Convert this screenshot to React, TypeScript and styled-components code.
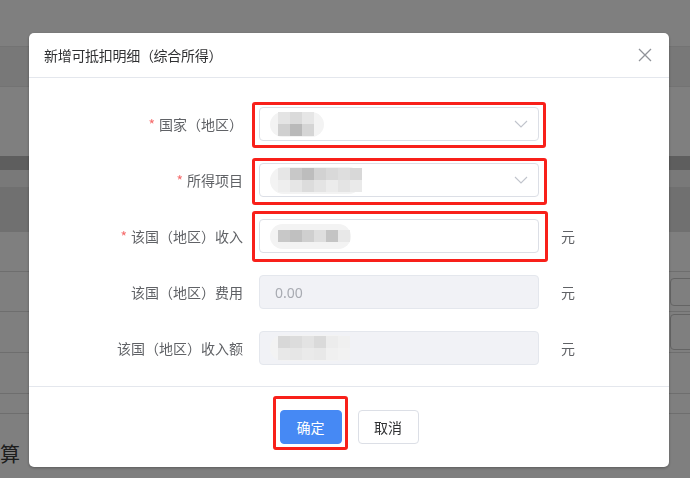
import styled, { createGlobalStyle } from 'styled-components'

const GlobalStyle = createGlobalStyle`
  html, body {
    margin: 0;
    padding: 0;
    width: 690px;
    height: 478px;
    overflow: hidden;
    background: #fff;
  }
  * { box-sizing: border-box; }
`

const cjk = `"Noto Sans CJK SC", "Noto Sans", sans-serif`

/* ---------- page behind the dialog ---------- */

const Page = styled.div`
  width: 690px;
  height: 478px;
  display: flex;
  flex-direction: column;
  background: #fff;
  overflow: hidden;
`

const Strip = styled.div<{ $h: number; $bg?: string; $line?: string }>`
  height: ${p => p.$h}px;
  flex: none;
  background: ${p => p.$bg ?? '#fff'};
  border-bottom: ${p => (p.$line ? `1px solid ${p.$line}` : 'none')};
  display: flex;
  justify-content: flex-end;
  align-items: center;
`

const EdgeBox = styled.div<{ $h: number }>`
  width: 40px;
  height: ${p => p.$h}px;
  margin-right: -20px;
  border: 1px solid #c8c8c8;
  border-radius: 4px;
`

const PageText = styled.div`
  margin: 28px 0 0 0;
  font-family: ${cjk};
  font-size: 20px;
  line-height: 24px;
  color: #3a3a3a;
`

/* ---------- modal ---------- */

const Overlay = styled.div`
  position: fixed;
  inset: 0;
  background: rgba(0, 0, 0, 0.5);
  display: flex;
  align-items: flex-start;
`

const Dialog = styled.div`
  margin: 33px 0 0 29px;
  width: 640px;
  height: 434px;
  background: #fff;
  border-radius: 5px;
  box-shadow: 0 1px 3px rgba(0, 0, 0, 0.3);
  display: flex;
  flex-direction: column;
  font-family: ${cjk};
`

const Header = styled.div`
  height: 45px;
  padding: 0 17px 0 15px;
  border-bottom: 1px solid #e4e7ed;
  display: flex;
  align-items: center;
  justify-content: space-between;
`

const Title = styled.span`
  font-size: 14px;
  color: #303133;
  letter-spacing: -0.3px;
`

const Close = styled.button`
  border: 0;
  background: none;
  padding: 0;
  width: 14px;
  height: 14px;
  display: flex;
  cursor: pointer;
`

const Body = styled.div`
  flex: 1;
  padding: 29px 0 21px;
  display: flex;
  flex-direction: column;
  gap: 22px;
`

const Row = styled.div`
  height: 34px;
  display: flex;
  align-items: center;
`

const Label = styled.label`
  width: 230px;
  padding-right: 16px;
  text-align: right;
  font-size: 14px;
  color: #606266;
  white-space: nowrap;
`

const Star = styled.span`
  color: #f56c6c;
  margin-right: 4px;
`

const Marked = styled.div<{ $t: number; $r: number; $b: number; $l: number }>`
  position: relative;
  &::after {
    content: '';
    position: absolute;
    top: -${p => p.$t}px;
    right: -${p => p.$r}px;
    bottom: -${p => p.$b}px;
    left: -${p => p.$l}px;
    border: 3px solid #f8201a;
    border-radius: 3px;
    pointer-events: none;
  }
`

const Field = styled.div<{ $disabled?: boolean }>`
  width: 280px;
  height: 34px;
  border: 1px solid ${p => (p.$disabled ? '#e4e7ed' : '#dcdfe6')};
  background: ${p => (p.$disabled ? '#f1f2f6' : '#fff')};
  border-radius: 4px;
  padding: 0 10px 0 10px;
  display: flex;
  align-items: center;
  justify-content: space-between;
`

const Placeholder = styled.span`
  padding-left: 5px;
  font-family: "Noto Sans", sans-serif;
  font-size: 14px;
  color: #a8abb2;
`

const Unit = styled.span`
  margin-left: 22px;
  font-size: 14px;
  color: #606266;
`

const Pill = styled.div<{ $pl: number; $pr: number; $h: number }>`
  height: ${p => p.$h}px;
  padding: 0 ${p => p.$pr}px 0 ${p => p.$pl}px;
  border-radius: ${p => p.$h / 2}px;
  background: #f3f3f3;
  display: flex;
  align-items: center;
  filter: blur(0.5px);
`

const Cells = styled.div<{ $cols: number }>`
  display: grid;
  grid-template-columns: repeat(${p => p.$cols}, 12px);
  grid-auto-rows: 12px;
`

const Cell = styled.div<{ $c: string }>`
  background: ${p => p.$c};
`

const Footer = styled.div`
  height: 81px;
  border-top: 1px solid #e4e7ed;
  display: flex;
  justify-content: center;
  align-items: center;
  gap: 16px;
`

const Button = styled.button<{ $primary?: boolean }>`
  height: 34px;
  width: ${p => (p.$primary ? 62 : 61)}px;
  padding: 0;
  border-radius: 4px;
  border: 1px solid ${p => (p.$primary ? '#4689f4' : '#dcdfe6')};
  background: ${p => (p.$primary ? '#4689f4' : '#fff')};
  color: ${p => (p.$primary ? '#fff' : '#303133')};
  font-family: ${cjk};
  font-size: 14px;
  cursor: pointer;
`

function Mosaic({ rows, pl, pr, h }: { rows: string[][]; pl: number; pr: number; h: number }) {
  return (
    <Pill $pl={pl} $pr={pr} $h={h}>
      <Cells $cols={rows[0].length}>
        {rows.flat().map((c, i) => (
          <Cell key={i} $c={c} />
        ))}
      </Cells>
    </Pill>
  )
}

function Chevron() {
  return (
    <svg width="14" height="8" viewBox="0 0 14 8">
      <path d="M1 1 L7 7 L13 1" fill="none" stroke="#c0c4cc" strokeWidth="1.1" />
    </svg>
  )
}

export default function App() {
  return (
    <>
      <GlobalStyle />
      <Page>
        <Strip $h={47} $line="#e6e6e6" />
        <Strip $h={40} $bg="#f0f0f0" $line="#e6e6e6" />
        <Strip $h={69} />
        <Strip $h={14} $bg="#bdbdbd" />
        <Strip $h={17} $bg="#f2f2f2" />
        <Strip $h={45} $bg="#e0e0e0" />
        <Strip $h={40} $line="#dcdcdc" />
        <Strip $h={40} $line="#dcdcdc">
          <EdgeBox $h={28} />
        </Strip>
        <Strip $h={41} $line="#dcdcdc">
          <EdgeBox $h={36} />
        </Strip>
        <Strip $h={41} $line="#dcdcdc" />
        <Strip $h={20} $line="#dcdcdc" />
        <PageText>算</PageText>
      </Page>

      <Overlay>
        <Dialog>
          <Header>
            <Title>新增可抵扣明细（综合所得）</Title>
            <Close aria-label="关闭">
              <svg width="14" height="14" viewBox="0 0 14 14">
                <path d="M1 1 L13 13 M13 1 L1 13" stroke="#909399" strokeWidth="1.3" />
              </svg>
            </Close>
          </Header>

          <Body>
            <Row>
              <Label>
                <Star>*</Star>国家（地区）
              </Label>
              <Marked $t={5} $r={7} $b={7} $l={7}>
                <Field>
                  <Mosaic
                    pl={8}
                    pr={10}
                    h={25}
                    rows={[
                      ['#e4e4e4', '#dadada', '#e6e6e6'],
                      ['#d0d0d0', '#b9b9b9', '#d5d5d5'],
                    ]}
                  />
                  <Chevron />
                </Field>
              </Marked>
            </Row>

            <Row>
              <Label>
                <Star>*</Star>所得项目
              </Label>
              <Marked $t={5} $r={8} $b={8} $l={7}>
                <Field>
                  <Mosaic
                    pl={8}
                    pr={0}
                    h={27}
                    rows={[
                      ['#e6e6e6', '#c8c8c8', '#bdbdbd', '#d2d2d2', '#d9d9d9', '#dedede', '#d8d8d8'],
                      ['#eeeeee', '#e6e6e6', '#dcdcdc', '#e4e4e4', '#ececec', '#e4e4e4', '#eaeaea'],
                    ]}
                  />
                  <Chevron />
                </Field>
              </Marked>
            </Row>

            <Row>
              <Label>
                <Star>*</Star>该国（地区）收入
              </Label>
              <Marked $t={8} $r={9} $b={9} $l={7}>
                <Field>
                  <Mosaic
                    pl={8}
                    pr={1}
                    h={25}
                    rows={[['#c8c8c8', '#c0c0c0', '#cfcfcf', '#dedede', '#c4c4c4', '#e8e8e8']]}
                  />
                </Field>
              </Marked>
              <Unit>元</Unit>
            </Row>

            <Row>
              <Label>该国（地区）费用</Label>
              <Field $disabled>
                <Placeholder>0.00</Placeholder>
              </Field>
              <Unit>元</Unit>
            </Row>

            <Row>
              <Label>该国（地区）收入额</Label>
              <Field $disabled>
                <Mosaic
                  pl={8}
                  pr={0}
                  h={26}
                  rows={[
                    ['#d8d8d8', '#dcdcdc', '#e3e3e3', '#dadada', '#ececec', '#f0f0f0'],
                    ['#e8e8e8', '#e6e6e6', '#eaeaea', '#e8e8e8', '#f0f0f0', '#f2f2f2'],
                  ]}
                />
              </Field>
              <Unit>元</Unit>
            </Row>
          </Body>

          <Footer>
            <Marked $t={14} $r={6} $b={6} $l={7}>
              <Button $primary>确定</Button>
            </Marked>
            <Button>取消</Button>
          </Footer>
        </Dialog>
      </Overlay>
    </>
  )
}
